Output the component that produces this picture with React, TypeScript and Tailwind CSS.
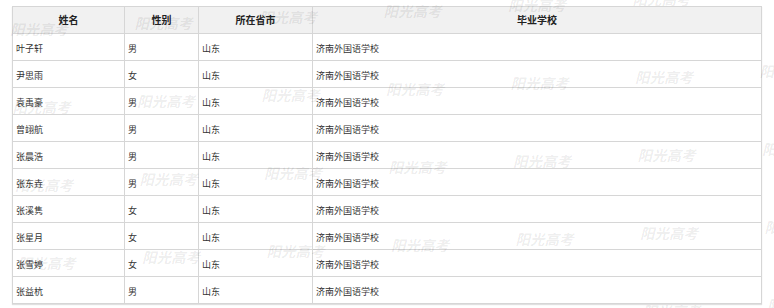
import React from "react";

const rows: [string, string, string, string][] = [
  ["叶子轩", "男", "山东", "济南外国语学校"],
  ["尹思雨", "女", "山东", "济南外国语学校"],
  ["袁禹豪", "男", "山东", "济南外国语学校"],
  ["曾翊航", "男", "山东", "济南外国语学校"],
  ["张晨浩", "男", "山东", "济南外国语学校"],
  ["张东垚", "男", "山东", "济南外国语学校"],
  ["张溪隽", "女", "山东", "济南外国语学校"],
  ["张星月", "女", "山东", "济南外国语学校"],
  ["张雪婷", "女", "山东", "济南外国语学校"],
  ["张益杭", "男", "山东", "济南外国语学校"],
];

const marks: { x: number; y: number }[] = [];
for (let b = 0; b < 5; b++) {
  for (let k = 0; k < 7; k++) {
    marks.push({ x: 10 + 2.5 * b + 124.5 * k, y: 31 + 78 * b - 6 * k - 9 });
  }
}

export default function App() {
  const font = { fontFamily: '"Noto Sans CJK SC", "Noto Sans", sans-serif' };
  return (
    <div className="relative w-[774px] h-[308px] bg-white overflow-hidden" style={font}>
      <div className="pt-[6px] pl-[12px]">
        <table className="table-fixed border-collapse w-[749px] text-[#333] shadow-[0_1px_1px_#e0e0e0]">
          <colgroup>
            <col className="w-[112px]" />
            <col className="w-[74px]" />
            <col className="w-[114px]" />
            <col className="w-[449px]" />
          </colgroup>
          <thead>
            <tr className="h-[27px] bg-[#f1f1f1]">
              {["姓名", "性别", "所在省市", "毕业学校"].map((h) => (
                <th
                  key={h}
                  className="border border-[#d6d6d6] text-center text-[10px] font-bold leading-none p-0 text-[#222]"
                >
                  {h}
                </th>
              ))}
            </tr>
          </thead>
          <tbody>
            {rows.map((r, i) => (
              <tr key={i} className="h-[27px]">
                {r.map((c, j) => (
                  <td
                    key={j}
                    className="border border-[#d6d6d6] text-left text-[9px] leading-none pl-[3px] pt-[2px] align-middle"
                  >
                    {c}
                  </td>
                ))}
              </tr>
            ))}
          </tbody>
        </table>
      </div>
      <div className="absolute inset-0 pointer-events-none">
        {marks.map((m, i) => (
          <span
            key={i}
            className="absolute text-[14.5px] font-bold italic leading-none text-black/[0.08] whitespace-nowrap"
            style={{ left: m.x, top: m.y }}
          >
            阳光高考
          </span>
        ))}
      </div>
    </div>
  );
}
